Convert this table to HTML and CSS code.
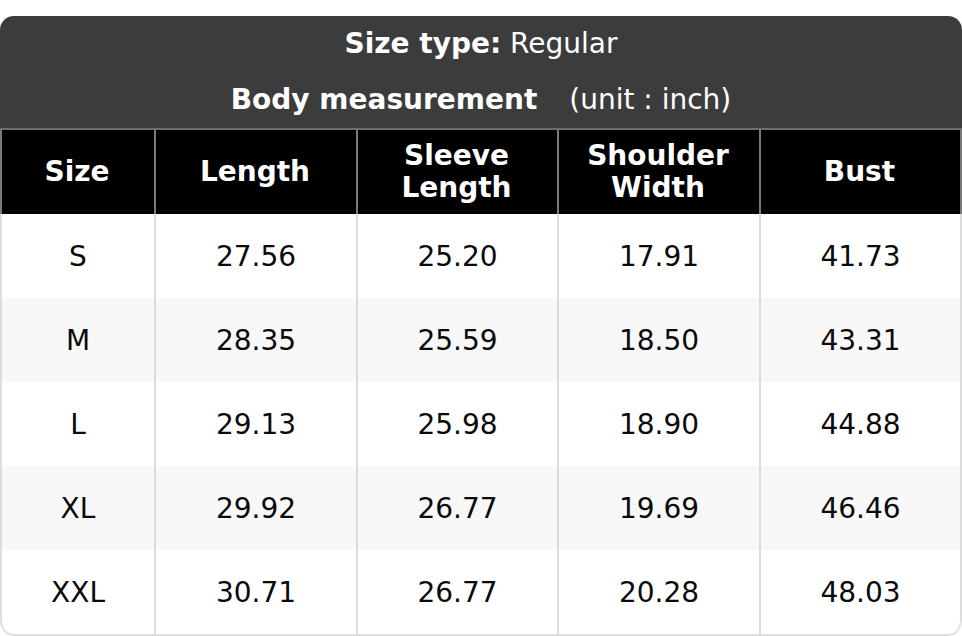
FILE: index.html
```html
<!DOCTYPE html>
<html>
<head>
<meta charset="utf-8">
<link rel="stylesheet" href="styles.css">
</head>
<body>
<div class="chart">
  <div class="title">
    <div class="title-line"><b>Size type:</b> Regular</div>
    <div class="title-line"><b>Body measurement</b><span class="unit">(unit : inch)</span></div>
  </div>
  <div class="row head">
    <div class="cell">Size</div>
    <div class="cell">Length</div>
    <div class="cell">Sleeve<br>Length</div>
    <div class="cell">Shoulder<br>Width</div>
    <div class="cell">Bust</div>
  </div>
  <div class="row">
    <div class="cell">S</div><div class="cell">27.56</div><div class="cell">25.20</div><div class="cell">17.91</div><div class="cell">41.73</div>
  </div>
  <div class="row alt">
    <div class="cell">M</div><div class="cell">28.35</div><div class="cell">25.59</div><div class="cell">18.50</div><div class="cell">43.31</div>
  </div>
  <div class="row">
    <div class="cell">L</div><div class="cell">29.13</div><div class="cell">25.98</div><div class="cell">18.90</div><div class="cell">44.88</div>
  </div>
  <div class="row alt">
    <div class="cell">XL</div><div class="cell">29.92</div><div class="cell">26.77</div><div class="cell">19.69</div><div class="cell">46.46</div>
  </div>
  <div class="row last">
    <div class="cell">XXL</div><div class="cell">30.71</div><div class="cell">26.77</div><div class="cell">20.28</div><div class="cell">48.03</div>
  </div>
</div>
</body>
</html>
```

FILE: styles.css
```css
* { box-sizing: border-box; }
html, body {
  margin: 0;
  padding: 0;
  background: #fff;
}
body {
  padding-top: 16px;
  font-family: "DejaVu Sans", Verdana, sans-serif;
  font-size: 28px;
  line-height: 32px;
  color: #0a0a0a;
}
.chart {
  width: 962px;
  border-radius: 14px;
  overflow: hidden;
}
.title {
  background: #3c3c3c;
  color: #fff;
  text-align: center;
  border-bottom: 2px solid #6e6e6e;
}
.title-line {
  padding: 12px 0;
}
.title-line b { font-weight: bold; }
.unit { margin-left: 32px; }
.row {
  display: grid;
  grid-template-columns: 154px 202px 201px 202px 203px;
  background: #fff;
}
.row.alt { background: #f8f8f8; }
.cell {
  border-left: 2px solid #dddddd;
  height: 84px;
  padding-top: 2px;
  display: flex;
  align-items: center;
  justify-content: center;
  text-align: center;
}
.cell:last-child { border-right: 2px solid #dddddd; }
.row.head { background: #000; color: #fff; font-weight: bold; }
.row.head .cell { border-color: #7a7a7a; padding-top: 0; padding-right: 2px; }
.row.last { border-bottom: 2px solid #dddddd; border-radius: 0 0 14px 14px; }
.row.last .cell:first-child { border-bottom-left-radius: 14px; }
.row.last .cell:last-child { border-bottom-right-radius: 14px; }
```
